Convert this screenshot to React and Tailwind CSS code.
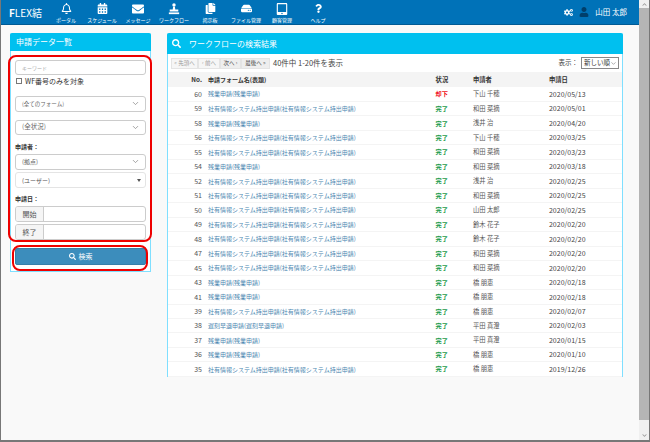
import { FaRegBell, FaCalendarAlt, FaEnvelope, FaCopy, FaHdd, FaTabletAlt, FaQuestion, FaCogs, FaUser, FaSearch, FaChevronDown, FaChevronUp } from "react-icons/fa";
import { ChevronDown } from "lucide-react";

const SHAYU = "社有情報システム持出申請(社有情報システム持出申請)";
const ZANGYO = "残業申請(残業申請)";
const CHIKOKU = "遅刻早退申請(遅刻早退申請)";

const rows = [
  ["60", ZANGYO, "却下", "下山 千穂", "2020/05/13"],
  ["59", SHAYU, "完了", "和田 菜摘", "2020/05/01"],
  ["58", ZANGYO, "完了", "浅井 治", "2020/04/20"],
  ["56", SHAYU, "完了", "下山 千穂", "2020/03/25"],
  ["55", SHAYU, "完了", "和田 菜摘", "2020/03/23"],
  ["54", ZANGYO, "完了", "和田 菜摘", "2020/03/18"],
  ["52", SHAYU, "完了", "浅井 治", "2020/02/25"],
  ["51", SHAYU, "完了", "和田 菜摘", "2020/02/25"],
  ["50", SHAYU, "完了", "山田 太郎", "2020/02/25"],
  ["49", SHAYU, "完了", "鈴木 花子", "2020/02/20"],
  ["48", SHAYU, "完了", "鈴木 花子", "2020/02/20"],
  ["47", SHAYU, "完了", "和田 菜摘", "2020/02/20"],
  ["45", SHAYU, "完了", "和田 菜摘", "2020/02/20"],
  ["43", ZANGYO, "完了", "橋 朋恵", "2020/02/18"],
  ["41", ZANGYO, "完了", "橋 朋恵", "2020/02/18"],
  ["39", SHAYU, "完了", "橋 朋恵", "2020/02/07"],
  ["38", CHIKOKU, "完了", "平田 真澄", "2020/02/03"],
  ["37", ZANGYO, "完了", "平田 真澄", "2020/01/15"],
  ["36", ZANGYO, "完了", "橋 朋恵", "2020/01/10"],
  ["35", SHAYU, "完了", "橋 朋恵", "2019/12/26"],
];

const StampIcon = () => (
  <svg width="12" height="12" viewBox="0 0 14 14" fill="white">
    <circle cx="7" cy="2.2" r="2" />
    <path d="M6 4h2l.5 3.5h3.5v2.5H2V7.500h3.500z" />
    <rect x="1" y="11" width="12" height="2" />
  </svg>
);

const navItems = [
  { label: "ポータル", icon: <FaRegBell size={11} /> },
  { label: "スケジュール", icon: <FaCalendarAlt size={11} /> },
  { label: "メッセージ", icon: <FaEnvelope size={12} /> },
  { label: "ワークフロー", icon: <StampIcon /> },
  { label: "掲示板", icon: <FaCopy size={11} /> },
  { label: "ファイル管理", icon: <FaHdd size={11} /> },
  { label: "顧客管理", icon: <FaTabletAlt size={12} /> },
  { label: "ヘルプ", icon: <FaQuestion size={9} /> },
];

const SelectBox = ({ label, size = "text-[6px]" }) => (
  <div className="h-[15.5px] border border-[#ccc] rounded-[3px] bg-white flex items-center justify-between pl-[6px] pr-[5px]">
    <span className={`${size} text-[#666]`}>{label}</span>
    <ChevronDown size={9} className="text-[#888]" />
  </div>
);

const DateRow = ({ label }) => (
  <div className="h-[16px] flex border border-[#ccc] rounded-[3px] bg-white overflow-hidden">
    <span className="w-[28px] border-r border-[#ccc] bg-[#f5f5f5] text-[7px] leading-[14px] text-center text-[#555]">{label}</span>
  </div>
);

const PageBtn = ({ children, dim, w }) => (
  <span className={`${w} h-[11px] flex items-center justify-center border border-[#e4e4e4] text-[5.5px] whitespace-nowrap ${dim ? "text-[#999] bg-[#f6f6f6]" : "text-[#444] bg-[#eee]"}`}>
    {children}
  </span>
);

export default function App() {
  return (
    <div
      className="w-[650px] h-[442px] overflow-hidden flex bg-[#f9f9f9] border-l border-r border-b-2 border-[#777] text-[#333]"
      style={{ fontFamily: '"Noto Sans CJK JP", "Liberation Sans", sans-serif' }}
    >
      <div className="w-[638px] flex flex-col">
        {/* Header */}
        <header className="h-[25px] shrink-0 bg-[#0072b8] border-b border-[#005a94] flex items-center text-white">
          <div className="w-[47px] pl-[8px] text-[10px] whitespace-nowrap"><span className="font-bold">F</span>LEX結</div>
          <nav className="flex">
            {navItems.map((item) => (
              <div key={item.label} className="w-[36px] flex flex-col items-center">
                <div className="h-[14px] flex items-center">{item.icon}</div>
                <span className="text-[5px] leading-[7px] whitespace-nowrap">{item.label}</span>
              </div>
            ))}
          </nav>
          <div className="ml-auto flex items-center pr-[12px]">
            <FaCogs size={9} />
            <FaUser size={10} className="ml-[6px] text-[#003f6b]" />
            <span className="ml-[6px] text-[7.5px] whitespace-nowrap">山田 太郎</span>
          </div>
        </header>

        <div className="flex items-start gap-[16px] pl-[9px] pt-[8px]">
          {/* Left panel */}
          <aside className="relative w-[141px] shrink-0 border-x border-b border-[#7fdfff] rounded-t-[2px] bg-white">
            <div className="h-[18px] -mx-px rounded-t-[2px] bg-[#00c0ef] text-white text-[8px] leading-[18px] pl-[6px]">申請データ一覧</div>
            <div className="px-[4px] pt-[9px]">
              <div className="h-[15px] border border-[#ccc] rounded-[3px] pl-[6px] text-[5px] leading-[13px] text-[#aaa]">キーワード</div>
              <label className="mt-[1px] flex items-center h-[10px] text-[7px] text-[#333] whitespace-nowrap">
                <span className="w-[6px] h-[6px] border border-[#777] bg-white ml-[1px] mr-[3px]"></span>
                WF番号のみを対象
              </label>
              <div className="mt-[10px]"><SelectBox label="(全てのフォーム)" size="text-[5.5px]" /></div>
              <div className="mt-[8px]"><SelectBox label="(全状況)" size="text-[6.5px]" /></div>
              <div className="mt-[7px] text-[6px] leading-[10px] font-bold">申請者：</div>
              <div className="mt-[2px]"><SelectBox label="(拠点)" /></div>
              <div className="mt-[2.5px] h-[16px] border border-[#e4e4e4] rounded-[3px] flex items-center justify-between pl-[6px] pr-[4px] text-[6px] text-[#555]">
                <span>(ユーザー)</span>
                <span className="w-0 h-0 border-x-[2px] border-x-transparent border-t-[3px] border-t-[#555]"></span>
              </div>
              <div className="mt-[6px] text-[6px] leading-[10px] font-bold">申請日：</div>
              <div className="mt-[2px]"><DateRow label="開始" /></div>
              <div className="mt-[2px]"><DateRow label="終了" /></div>
              <div className="mt-[8px] mb-[6px] h-[17px] rounded-[2px] bg-[#3c8dbc] border border-[#367fa9] flex items-center justify-center gap-[3px] text-white text-[7px]">
                <FaSearch size={7} />
                検索
              </div>
            </div>
            {/* red highlight frames */}
            <div className="absolute left-[-3px] top-[22px] w-[144px] h-[187px] border-2 border-[#ee0000] rounded-[8px] pointer-events-none"></div>
            <div className="absolute left-[1px] top-[211.5px] w-[136px] h-[26px] border-2 border-[#ee0000] rounded-[8px] pointer-events-none"></div>
          </aside>

          {/* Right panel */}
          <main className="w-[456px] shrink-0 border-x border-[#7fdfff] rounded-t-[2px] bg-white">
            <div className="h-[21px] -mx-px rounded-t-[2px] bg-[#00c0ef] text-white flex items-center pl-[5px] gap-[8px] text-[8px]">
              <FaSearch size={9} />
              ワークフローの検索結果
            </div>
            <div className="h-[18px] flex items-center pl-[3px] pr-[3px]">
              <PageBtn dim w="w-[27px]">« 先頭へ</PageBtn>
              <PageBtn dim w="w-[22px]">‹ 前へ</PageBtn>
              <PageBtn w="w-[21px]">次へ ›</PageBtn>
              <PageBtn w="w-[29px]">最後へ »</PageBtn>
              <span className="ml-[3px] text-[7.5px] text-[#444] whitespace-nowrap">40件中 1-20件を表示</span>
              <span className="ml-auto text-[6.5px] text-[#444] whitespace-nowrap">表示：</span>
              <span className="ml-[3px] w-[38px] h-[12px] border border-[#888] flex items-center justify-between pl-[2px] pr-[1px] text-[6.5px] text-[#333] whitespace-nowrap">
                新しい順
                <ChevronDown size={7} className="text-[#777]" />
              </span>
            </div>
            <table className="w-full border-collapse table-fixed">
              <colgroup>
                <col className="w-[34px]" />
                <col className="w-[233.6px]" />
                <col className="w-[37.4px]" />
                <col className="w-[76px]" />
                <col />
              </colgroup>
              <thead>
                <tr className="h-[15px] bg-[#f4f4f4] text-[#333] text-[6.3px]">
                  <th className="text-right font-bold">No.</th>
                  <th className="text-left pl-[6px] font-bold text-[6px]">申請フォーム名(表題)</th>
                  <th className="text-left font-bold">状況</th>
                  <th className="text-left font-bold">申請者</th>
                  <th className="text-left font-bold">申請日</th>
                </tr>
              </thead>
              <tbody>
                {rows.map((r) => (
                  <tr key={r[0]} className="h-[14.47px] border-b border-[#f4f4f4]">
                    <td className="text-right text-[7px] text-[#555]">{r[0]}</td>
                    <td className="pl-[6px] text-[6px] text-[#4a86b0] whitespace-nowrap">{r[1]}</td>
                    <td className={`text-[6.2px] font-bold ${r[2] === "却下" ? "text-[#f01020]" : "text-[#1a9a4a]"}`}>{r[2]}</td>
                    <td className="text-[6.3px] text-[#555]">{r[3]}</td>
                    <td className="text-[7px] text-[#444]">{r[4]}</td>
                  </tr>
                ))}
              </tbody>
            </table>
          </main>
        </div>
      </div>

      {/* Scrollbar */}
      <div className="w-[10px] flex flex-col bg-[#f0f0f0]">
        <div className="h-[8px] flex items-center justify-center">
          <FaChevronUp size={5} className="text-[#999]" />
        </div>
        <div className="flex-1 bg-[#b5b5b5]"></div>
        <div className="h-[20px] flex items-end justify-center pb-[2px]">
          <FaChevronDown size={5} className="text-[#999]" />
        </div>
      </div>
    </div>
  );
}
